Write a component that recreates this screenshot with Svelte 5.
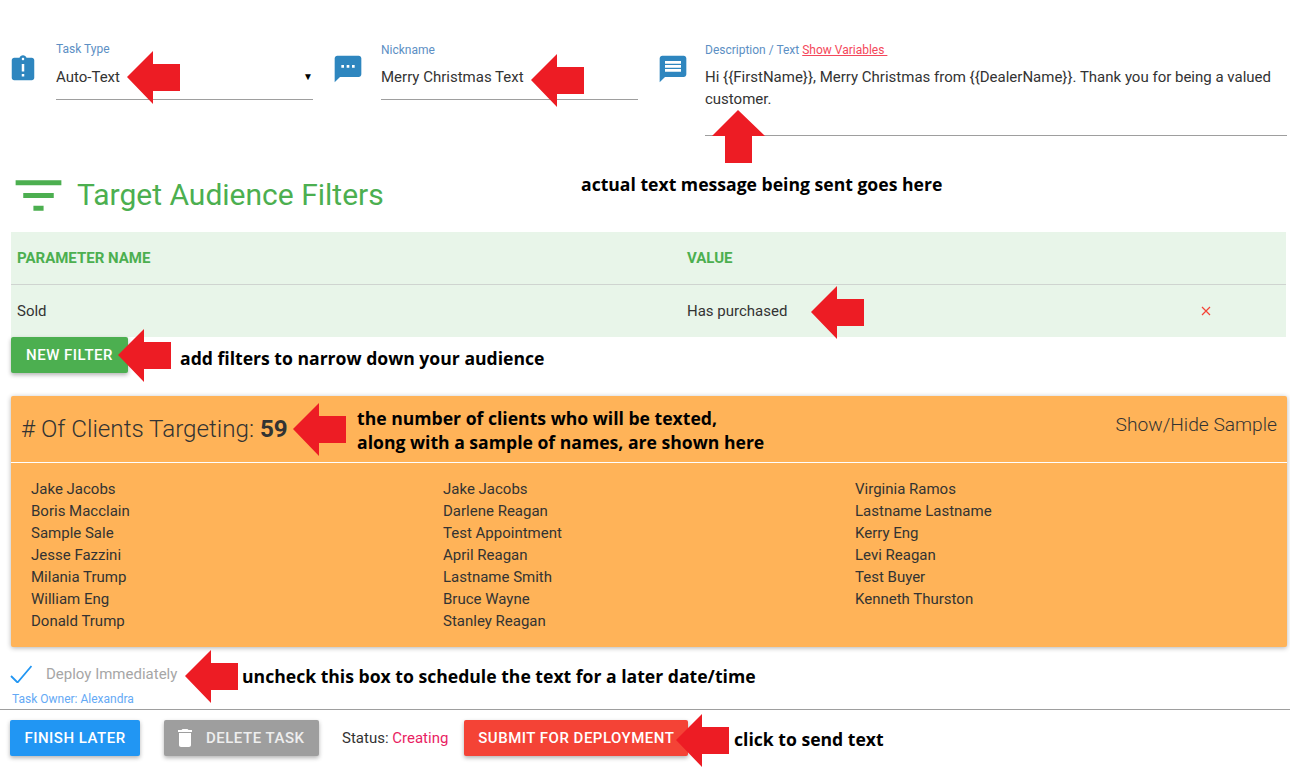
<script>
  const leftArrows = [
    [127, 77], [531, 80], [811, 312], [118, 355], [293, 429], [185, 676], [676, 740]
  ];

  function arrowPoints([x, y]) {
    return [
      [x, y], [x + 26, y - 26], [x + 26, y - 13], [x + 53, y - 13],
      [x + 53, y + 14], [x + 26, y + 14], [x + 26, y + 27]
    ].join(" ");
  }

  const notes = [
    { x: 581, y: 172, text: "actual text message being sent goes here" },
    { x: 180, y: 346, text: "add filters to narrow down your audience" },
    { x: 357, y: 406, text: "the number of clients who will be texted," },
    { x: 357, y: 430, text: "along with a sample of names, are shown here" },
    { x: 242, y: 664, text: "uncheck this box to schedule the text for a later date/time" },
    { x: 734, y: 727, text: "click to send text" }
  ];

  const clients = [
    ["Jake Jacobs", "Boris Macclain", "Sample Sale", "Jesse Fazzini", "Milania Trump", "William Eng", "Donald Trump"],
    ["Jake Jacobs", "Darlene Reagan", "Test Appointment", "April Reagan", "Lastname Smith", "Bruce Wayne", "Stanley Reagan"],
    ["Virginia Ramos", "Lastname Lastname", "Kerry Eng", "Levi Reagan", "Test Buyer", "Kenneth Thurston"]
  ];
</script>

<main>
  <section class="task-form">
    <svg class="icon icon-task" viewBox="0 0 24 24"><path d="M19 3h-4.18C14.4 1.84 13.3 1 12 1c-1.3 0-2.4.84-2.82 2H5c-1.1 0-2 .9-2 2v14c0 1.1.9 2 2 2h14c1.1 0 2-.9 2-2V5c0-1.1-.9-2-2-2zm-6 15h-2v-2h2v2zm0-4h-2V8h2v6zm-1-9c-.55 0-1-.45-1-1s.45-1 1-1 1 .45 1 1-.45 1-1 1z" /></svg>
    <div class="field">
      <span class="label">Task Type</span>
      <div class="value select">Auto-Text<span class="caret">▼</span></div>
    </div>

    <svg class="icon icon-nick" viewBox="0 0 24 24"><path d="M20 2H4c-1.1 0-1.99.9-1.99 2L2 22l4-4h14c1.1 0 2-.9 2-2V4c0-1.1-.9-2-2-2zM9 11H7V9h2v2zm4 0h-2V9h2v2zm4 0h-2V9h2v2z" /></svg>
    <div class="field">
      <span class="label low">Nickname</span>
      <div class="value">Merry Christmas Text</div>
    </div>

    <svg class="icon" viewBox="0 0 24 24"><path d="M20 2H4c-1.1 0-1.99.9-1.99 2L2 22l4-4h14c1.1 0 2-.9 2-2V4c0-1.1-.9-2-2-2zm-2 12H6v-2h12v2zm0-3H6V9h12v2zm0-3H6V6h12v2z" /></svg>
    <div class="field">
      <span class="label low">Description / Text <span class="link">Show Variables&nbsp;</span></span>
      <div class="value message">Hi {"{{"}FirstName{"}}"}, Merry Christmas from {"{{"}DealerName{"}}"}. Thank you for being a valued customer.</div>
    </div>
  </section>

  <h2 class="section-title">
    <svg viewBox="0 0 24 24"><path d="M10 18h4v-2h-4v2zM3 6v2h18V6H3zm3 7h12v-2H6v2z" /></svg>
    <span>Target Audience Filters</span>
  </h2>

  <div class="filters">
    <div class="filter-row head">
      <span>PARAMETER NAME</span>
      <span>VALUE</span>
    </div>
    <div class="filter-row">
      <span>Sold</span>
      <span>Has purchased</span>
      <svg class="remove" viewBox="0 0 10 10"><path d="M1 1l8 8M9 1l-8 8" /></svg>
    </div>
  </div>

  <button class="btn green">NEW FILTER</button>

  <section class="audience">
    <header>
      <h3># Of Clients Targeting: <b>59</b></h3>
      <span class="toggle">Show/Hide Sample</span>
    </header>
    <div class="names">
      {#each clients as col}
        <ul>
          {#each col as name}
            <li>{name}</li>
          {/each}
        </ul>
      {/each}
    </div>
  </section>

  <div class="deploy">
    <svg viewBox="0 0 22 18"><path d="M1 11l6.5 6.5L21.5 1" /></svg>
    <span>Deploy Immediately</span>
  </div>
  <div class="owner">Task Owner: Alexandra</div>

  <footer>
    <button class="btn blue">FINISH LATER</button>
    <button class="btn grey">
      <svg viewBox="0 0 24 24"><path d="M6 19c0 1.1.9 2 2 2h8c1.1 0 2-.9 2-2V7H6v12zM19 4h-3.5l-1-1h-5l-1 1H5v2h14V4z" /></svg>
      DELETE TASK
    </button>
    <span class="status">Status: <em>Creating</em></span>
    <button class="btn red">SUBMIT FOR DEPLOYMENT</button>
  </footer>

  <!-- annotations drawn over the screen -->
  <svg class="arrows" viewBox="0 0 1290 768">
    {#each leftArrows as a}
      <polygon points={arrowPoints(a)} />
    {/each}
    <polygon points="738,110 765,136 752,136 752,163 725,163 725,136 712,136" />
  </svg>
  {#each notes as n}
    <span class="note" style="left:{n.x}px;top:{n.y}px">{n.text}</span>
  {/each}
</main>

<style>
  :global(body) {
    margin: 0;
    background: #fff;
  }

  main {
    position: relative;
    width: 1290px;
    height: 768px;
    overflow: hidden;
    font-family: Roboto, sans-serif;
    font-size: 15px;
    color: #333;
  }

  .task-form {
    display: grid;
    grid-template-columns: 56px 257px 68px 257px 67px 582px;
    height: 96px;
    padding-top: 40px;
  }

  .icon {
    width: 32px;
    height: 32px;
    margin-top: 13px;
    justify-self: end;
    margin-right: 16px;
    fill: #2e86bf;
  }

  .icon-task {
    width: 30px;
    height: 30px;
    margin-top: 14px;
    margin-right: 18px;
  }

  .icon-nick {
    margin-right: 17px;
  }

  .field {
    display: flex;
    flex-direction: column;
  }

  .label {
    height: 18px;
    font-size: 12px;
    line-height: 18px;
    color: #5c8fc4;
  }

  .low {
    position: relative;
    top: 1px;
  }

  .link {
    color: #f4475a;
    text-decoration: underline;
  }

  .value {
    box-sizing: border-box;
    height: 42px;
    padding-top: 8px;
    line-height: 22px;
    border-bottom: 1px solid #9e9e9e;
  }

  .select {
    position: relative;
  }

  .caret {
    position: absolute;
    right: 0;
    top: 8px;
    font-size: 10px;
    color: #000;
  }

  .message {
    height: 78px;
  }

  .section-title {
    display: flex;
    align-items: center;
    height: 61px;
    margin: 29px 0 6px 8px;
    font-size: 30px;
    font-weight: 400;
    color: #4caf50;
  }

  .section-title span {
    margin-bottom: 2px;
  }

  .section-title svg {
    width: 61px;
    height: 61px;
    margin-right: 8px;
    fill: #4caf50;
  }

  .filters {
    width: 1275px;
    margin-left: 11px;
    background: #e8f5e9;
  }

  .filter-row {
    position: relative;
    display: grid;
    grid-template-columns: 670px 1fr;
    align-items: center;
    height: 52px;
    padding-left: 6px;
  }

  .head {
    border-bottom: 1px solid #cfd4d0;
    font-weight: 700;
    color: #4caf50;
  }

  .remove {
    position: absolute;
    left: 1190px;
    top: 21px;
    width: 10px;
    height: 10px;
    fill: none;
    stroke: #f44336;
    stroke-width: 1.2;
  }

  .btn {
    display: inline-flex;
    align-items: center;
    justify-content: center;
    height: 36px;
    padding: 0;
    border: 0;
    border-radius: 2px;
    font-family: inherit;
    font-size: 15px;
    font-weight: 500;
    letter-spacing: 0.5px;
    color: #fff;
    box-shadow: 0 2px 4px rgba(0, 0, 0, 0.3);
  }

  .green {
    display: flex;
    width: 117px;
    margin-left: 11px;
    background: #4caf50;
  }

  .audience {
    box-sizing: border-box;
    width: 1276px;
    height: 251px;
    margin: 23px 0 0 11px;
    border-radius: 2px;
    background: #ffb358;
    box-shadow: 0 1px 5px rgba(0, 0, 0, 0.3);
  }

  .audience header {
    display: flex;
    align-items: center;
    justify-content: space-between;
    height: 66px;
    padding: 0 10px;
    border-bottom: 1px solid #fff;
  }

  .audience h3 {
    margin: 0;
    font-size: 24.2px;
    font-weight: 300;
  }

  .audience b {
    font-weight: 700;
  }

  .toggle {
    margin-bottom: 10px;
    font-size: 19.2px;
    font-weight: 300;
  }

  .names {
    display: grid;
    grid-template-columns: 412px 412px 1fr;
    padding: 15px 0 0 20px;
  }

  .names ul {
    margin: 0;
    padding: 0;
    list-style: none;
  }

  .names li {
    line-height: 22px;
  }

  .deploy {
    display: flex;
    align-items: center;
    height: 24px;
    margin: 15px 0 0 10px;
    color: #a6a6a6;
  }

  .deploy svg {
    width: 22px;
    height: 18px;
    margin-right: 14px;
    fill: none;
    stroke: #2196f3;
    stroke-width: 1.8;
  }

  .owner {
    height: 16px;
    margin: 5px 0 0 12px;
    font-size: 12px;
    line-height: 16px;
    color: #64a9f5;
  }

  footer {
    display: flex;
    align-items: center;
    height: 47px;
    margin-top: 2px;
    padding: 10px 0 0 10px;
    box-sizing: border-box;
    border-top: 1px solid #9e9e9e;
  }

  .blue {
    width: 130px;
    background: #2196f3;
  }

  .grey {
    box-sizing: border-box;
    width: 155px;
    margin-left: 24px;
    padding-left: 9px;
    justify-content: flex-start;
    background: #9e9e9e;
    color: #eee;
  }

  .grey svg {
    width: 24px;
    height: 24px;
    margin-right: 9px;
    fill: #fff;
  }

  .status {
    margin-left: 23px;
  }

  .status em {
    font-style: normal;
    color: #e91e63;
  }

  .red {
    width: 224px;
    margin-left: 16px;
    background: #f44336;
  }

  .arrows {
    position: absolute;
    inset: 0;
    width: 1290px;
    height: 768px;
    fill: #ed1c24;
    pointer-events: none;
  }

  .note {
    position: absolute;
    font-family: "Open Sans", sans-serif;
    font-size: 17.6px;
    line-height: 25px;
    font-weight: 700;
    color: #000;
    white-space: nowrap;
  }
</style>
